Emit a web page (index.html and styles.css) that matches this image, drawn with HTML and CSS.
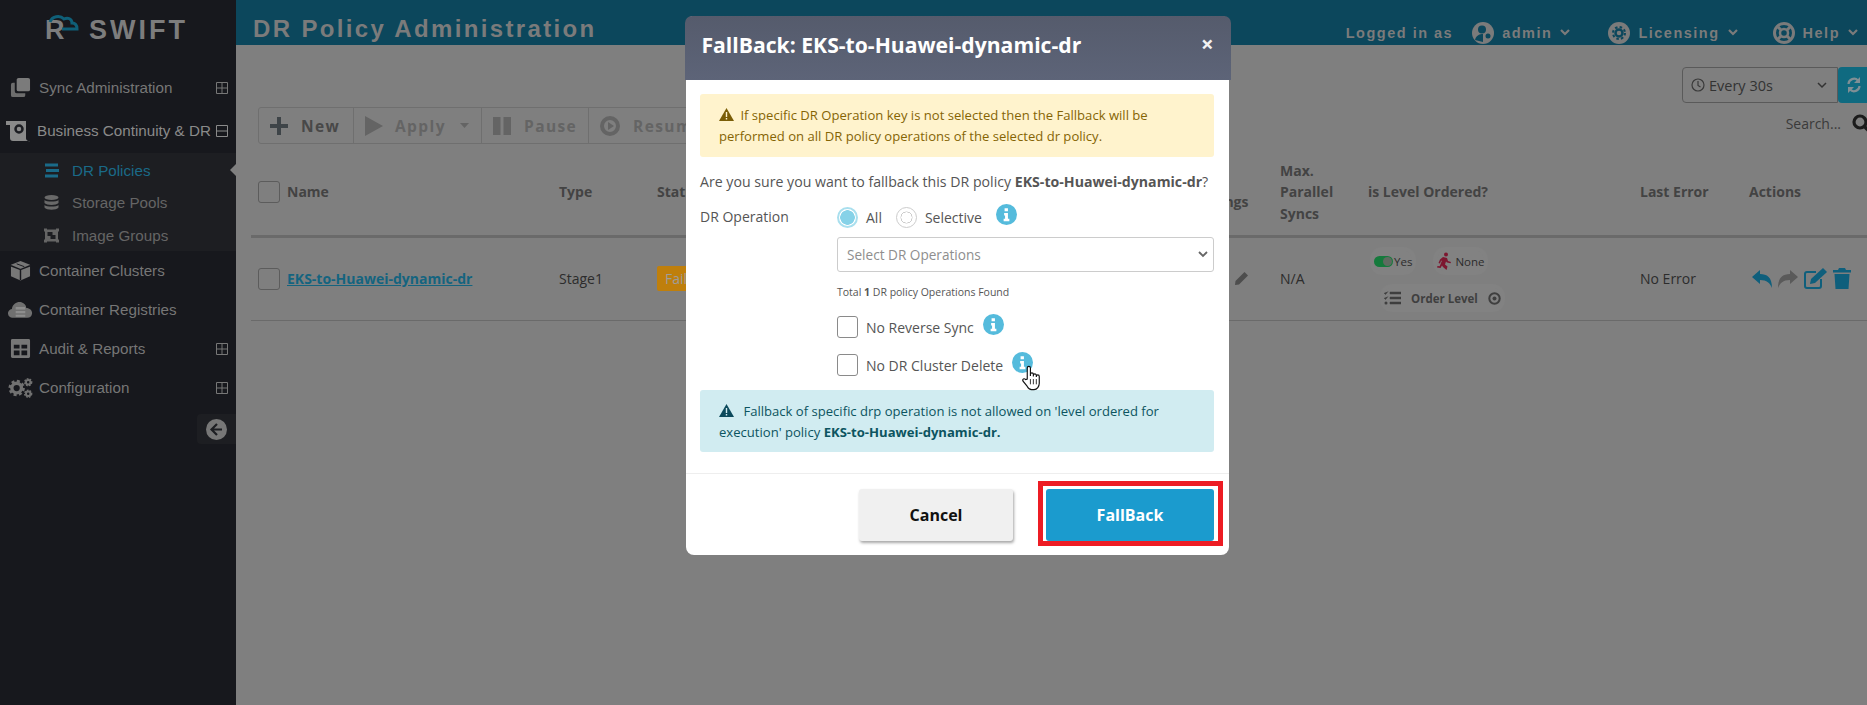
FILE: index.html
```html
<!DOCTYPE html>
<html lang="en">
<head>
<meta charset="utf-8">
<title>DR Policy Administration</title>
<link rel="stylesheet" href="styles.css">
</head>
<body>
<div class="app">
  <aside class="sidebar">
    <div class="logo">
      <span class="logo-mark">R
        <svg class="logo-cloud" width="32" height="20" viewBox="0 0 32 20"><path d="M3 7C5 1 13 0 17 4C21 2 25 4 25 8C28 8 30 10 30 14H15" fill="none" stroke="#0f5f78" stroke-width="3"/></svg>
      </span>
      <span class="logo-text">SWIFT</span>
    </div>
    <nav class="nav">
      <a class="nav-item">
        <svg class="nav-icon" viewBox="0 0 22 22"><rect x="7" y="1" width="14" height="14" rx="2" fill="#7b7b7b"/><path d="M5 6H3a2 2 0 0 0-2 2v11a2 2 0 0 0 2 2h11a2 2 0 0 0 2-2v-2H7a2 2 0 0 1-2-2z" fill="#6d6d6d"/></svg>
        <span class="nav-label">Sync Administration</span>
        <svg class="nav-box" viewBox="0 0 12 12"><path d="M.5.5h11v11H.5zM6 .5v11M.5 6h11" fill="none" stroke="#777"/></svg>
      </a>
      <a class="nav-item nav-item-active">
        <svg class="nav-icon nav-icon-wide" viewBox="0 0 26 22"><path d="M1 1h20v17a3 3 0 0 0 4 3H8a3 3 0 0 1-3-3V5H1z" fill="#8a8a8a"/><circle cx="14" cy="9" r="3.500" fill="none" stroke="#1c1d22" stroke-width="2.500"/></svg>
        <span class="nav-label">Business Continuity &amp; DR</span>
        <svg class="nav-box" viewBox="0 0 12 12"><path d="M.5.5h11v11H.5zM.5 6h11" fill="none" stroke="#8a8a8a"/></svg>
      </a>
      <div class="subnav">
        <a class="sub-item sub-item-active">
          <svg class="sub-icon" viewBox="0 0 15 14"><path d="M1 0h13v3H1zM2 5.500h13v3H2zM1 11h13v3H1z" fill="#1a6a88"/></svg>
          <span>DR Policies</span>
          <i class="sub-arrow"></i>
        </a>
        <a class="sub-item">
          <svg class="sub-icon" viewBox="0 0 15 15"><ellipse cx="7.500" cy="2.500" rx="7" ry="2.500" fill="#696969"/><path d="M.5 5c2 2 12 2 14 0v3c-2 2.500-12 2.500-14 0zM.5 10c2 2 12 2 14 0v2.500c-2 3-12 3-14 0z" fill="#696969"/></svg>
          <span>Storage Pools</span>
        </a>
        <a class="sub-item">
          <svg class="sub-icon" viewBox="0 0 15 14"><path d="M0 0h3v1h9V0h3v3h-1v8h1v3h-3v-1H3v1H0v-3h1V3H0z" fill="#656565"/><path d="M3.500 3.500h5v3h3v4h-5v-3h-3z" fill="#1d1e22"/></svg>
          <span>Image Groups</span>
        </a>
      </div>
      <a class="nav-item nav-item-low">
        <svg class="nav-icon" viewBox="0 0 22 22"><path d="M11 1l10 4v12l-10 4.500L1 17V5z" fill="#777"/><path d="M1 6l10 4 10-4M11 10v11" stroke="#17181d" stroke-width="1.500" fill="none"/><path d="M7 4l8 3" stroke="#17181d"/></svg>
        <span class="nav-label">Container Clusters</span>
      </a>
      <a class="nav-item nav-item-low">
        <svg class="nav-icon nav-icon-cloud" viewBox="0 0 26 18"><path d="M5 17a4.500 4.500 0 0 1-1-9C5 2 10 0 14 1c3 1 5 3 5 6 4 0 6.500 3 6 6-.5 3-2 4-5 4z" fill="#707070"/><path d="M8 6h10v2.500H8zM8 10h10v2.500H8zM8 14h10v2H8z" fill="#8d8d8d"/></svg>
        <span class="nav-label">Container Registries</span>
      </a>
      <a class="nav-item nav-item-low">
        <svg class="nav-icon" viewBox="0 0 22 20"><path d="M1 1.500A1.500 1.500 0 0 1 2.500 0h17A1.500 1.500 0 0 1 21 1.500v17a1.500 1.500 0 0 1-1.500 1.500h-17A1.500 1.500 0 0 1 1 18.500z" fill="#777"/><path d="M4 6h6v4H4zM12 6h6v4h-6zM4 12h6v5H4zM12 12h6v5h-6z" fill="#17181d"/></svg>
        <span class="nav-label">Audit &amp; Reports</span>
        <svg class="nav-box" viewBox="0 0 12 12"><path d="M.5.5h11v11H.5zM6 .5v11M.5 6h11" fill="none" stroke="#777"/></svg>
      </a>
      <a class="nav-item nav-item-low">
        <svg class="nav-icon nav-icon-cloud" viewBox="0 0 26 20"><circle cx="9" cy="10" r="5" fill="none" stroke="#717171" stroke-width="3.500"/><circle cx="9" cy="10" r="7" fill="none" stroke="#717171" stroke-width="3" stroke-dasharray="3 2.500"/><circle cx="21" cy="4" r="2.300" fill="none" stroke="#717171" stroke-width="2"/><circle cx="21" cy="4" r="3.600" fill="none" stroke="#717171" stroke-width="1.500" stroke-dasharray="1.800 1.200"/><circle cx="21" cy="16" r="2.300" fill="none" stroke="#717171" stroke-width="2"/><circle cx="21" cy="16" r="3.600" fill="none" stroke="#717171" stroke-width="1.500" stroke-dasharray="1.800 1.200"/></svg>
        <span class="nav-label">Configuration</span>
        <svg class="nav-box" viewBox="0 0 12 12"><path d="M.5.5h11v11H.5zM6 .5v11M.5 6h11" fill="none" stroke="#777"/></svg>
      </a>
    </nav>
    <div class="collapse-wrap">
      <button class="collapse">
        <svg width="21" height="21" viewBox="0 0 21 21"><circle cx="10.500" cy="10.500" r="10.500" fill="#777"/><path d="M11 5l-5.500 5.500L11 16M6 10.500h10" fill="none" stroke="#1d1e22" stroke-width="2.200"/></svg>
      </button>
    </div>
  </aside>

  <main class="main">
    <header class="topbar">
      <h1 class="title">DR Policy Administration</h1>
      <div class="top-right">
        <span class="logged">Logged in as</span>
        <span class="top-item top-admin">
          <svg width="22" height="22" viewBox="0 0 22 22"><circle cx="11" cy="11" r="11" fill="#7b7b7b"/><circle cx="10" cy="7.500" r="4" fill="#0c475c"/><path d="M3 18c1-5 5-6 8-6v8z" fill="#0c475c"/><circle cx="16" cy="14" r="2.500" fill="#0c475c"/></svg>
          <span>admin</span>
          <svg class="chev" viewBox="0 0 10 7"><path d="M1 1l4 4 4-4" fill="none" stroke="#7b7b7b" stroke-width="2.200"/></svg>
        </span>
        <span class="top-item top-lic">
          <svg width="22" height="22" viewBox="0 0 22 22"><circle cx="11" cy="11" r="11" fill="#7b7b7b"/><circle cx="11" cy="11" r="3.500" fill="none" stroke="#0c475c" stroke-width="2.500"/><circle cx="11" cy="11" r="6" fill="none" stroke="#0c475c" stroke-width="2" stroke-dasharray="2.500 2.200"/></svg>
          <span>Licensing</span>
          <svg class="chev" viewBox="0 0 10 7"><path d="M1 1l4 4 4-4" fill="none" stroke="#7b7b7b" stroke-width="2.200"/></svg>
        </span>
        <span class="top-item top-help">
          <svg width="22" height="22" viewBox="0 0 22 22"><circle cx="11" cy="11" r="9.500" fill="none" stroke="#7b7b7b" stroke-width="3"/><circle cx="11" cy="11" r="4" fill="none" stroke="#7b7b7b" stroke-width="2.500"/><path d="M5 5l3 3M17 5l-3 3M5 17l3-3M17 17l-3-3" stroke="#7b7b7b" stroke-width="3"/></svg>
          <span>Help</span>
          <svg class="chev" viewBox="0 0 10 7"><path d="M1 1l4 4 4-4" fill="none" stroke="#7b7b7b" stroke-width="2.200"/></svg>
        </span>
      </div>
    </header>

    <section class="content">
      <div class="refresh-row">
        <div class="refresh-select">
          <svg width="14" height="14" viewBox="0 0 14 14"><circle cx="7" cy="7" r="6" fill="none" stroke="#3a3a3a" stroke-width="1.200"/><path d="M7 3v4.500l2.500 1.500" fill="none" stroke="#3a3a3a" stroke-width="1.200"/></svg>
          <span>Every 30s</span>
          <svg class="select-chev" width="10" height="7" viewBox="0 0 10 7"><path d="M1 1l4 4 4-4" fill="none" stroke="#333" stroke-width="1.500"/></svg>
        </div>
        <button class="refresh-btn">
          <svg width="14" height="16" viewBox="0 0 14 16"><path d="M1.500 7A5.500 5.500 0 0 1 11 3.500M12.500 9A5.500 5.500 0 0 1 3 12.500" fill="none" stroke="#7f8f95" stroke-width="2.200"/><path d="M13 0v6H7zM1 16v-6h6z" fill="#7f8f95"/></svg>
        </button>
      </div>

      <div class="tool-row">
        <div class="toolbar">
          <span class="tool tool-new">
            <svg width="18" height="18" viewBox="0 0 18 18"><path d="M7 0h4v7h7v4h-7v7H7v-7H0V7h7z" fill="#3e4448"/></svg>
            <span>New</span>
          </span>
          <span class="tool tool-apply tool-off">
            <svg width="18" height="20" viewBox="0 0 18 20"><path d="M0 0l18 10L0 20z" fill="#646464"/></svg>
            <span>Apply</span>
            <svg class="caret" width="9" height="5" viewBox="0 0 9 5"><path d="M0 0h9L4.500 5z" fill="#646464"/></svg>
          </span>
          <span class="tool tool-pause tool-off">
            <svg width="18" height="18" viewBox="0 0 18 18"><path d="M0 0h7.500v18H0zM10.500 0H18v18h-7.500z" fill="#646464"/></svg>
            <span>Pause</span>
          </span>
          <span class="tool tool-resume tool-off">
            <svg width="20" height="20" viewBox="0 0 20 20"><circle cx="10" cy="10" r="8" fill="none" stroke="#646464" stroke-width="4"/><path d="M8 6l6 4-6 4z" fill="#646464"/></svg>
            <span>Resume</span>
          </span>
        </div>
        <div class="search">
          <span>Search...</span>
          <svg width="20" height="20" viewBox="0 0 20 20"><circle cx="8" cy="8" r="6" fill="none" stroke="#1c1c1c" stroke-width="3.200"/><path d="M12.500 12.500L18 18" stroke="#1c1c1c" stroke-width="3.600"/></svg>
        </div>
      </div>

      <table class="table">
        <colgroup>
          <col class="col-name"><col class="col-type"><col class="col-status"><col class="col-settings"><col class="col-max"><col class="col-level"><col class="col-error"><col class="col-actions">
        </colgroup>
        <thead>
          <tr>
            <th><span class="name-cell"><i class="check"></i>Name</span></th>
            <th>Type</th>
            <th>Status</th>
            <th class="th-low">Settings</th>
            <th>Max.<br>Parallel<br>Syncs</th>
            <th>is Level Ordered?</th>
            <th>Last Error</th>
            <th>Actions</th>
          </tr>
        </thead>
        <tbody>
          <tr>
            <td><span class="name-cell"><i class="check"></i><a class="link">EKS-to-Huawei-dynamic-dr</a></span></td>
            <td>Stage1</td>
            <td><span class="badge">Failed</span></td>
            <td class="td-pencil">
              <svg width="13" height="13" viewBox="0 0 13 13"><path d="M9.500 0L13 3.500 4 12.500 0 13l.5-4z" fill="#4d4d4d"/></svg>
            </td>
            <td>N/A</td>
            <td>
              <div class="level">
                <div class="level-line">
                  <span class="chip">
                    <span class="toggle"><i></i></span>Yes
                  </span>
                  <span class="chip">
                    <svg width="14" height="18" viewBox="0 0 14 18"><circle cx="9" cy="2.500" r="2" fill="#7d1730"/><path d="M6 5l4 1 1 3 3 1-.5 1.200L10 10.500l-1-1-1 3 2.500 2L9.500 18 6 15l-1-1.500L3.500 16 0 15.500l.5-1.500 2.200.2L5 8.500 4 9 3 11.500 1.500 11 3 7.500z" fill="#7d1730"/></svg>
                    None
                  </span>
                </div>
                <span class="chip chip-order">
                  <svg width="17" height="14" viewBox="0 0 17 14"><path d="M6 1h11v2H6zM6 6h11v2H6zM6 11h11v2H6zM0 2l1.500 1.500L4 0.500M0 7l1.500 1.500L4 5.500" fill="#3f3f3f" stroke="#3f3f3f" stroke-width=".5"/><circle cx="2" cy="12" r="1.500" fill="#3f3f3f"/></svg>
                  <b>Order Level</b>
                  <svg class="eye" width="13" height="13" viewBox="0 0 13 13"><circle cx="6.500" cy="6.500" r="5.200" fill="none" stroke="#3f3f3f" stroke-width="2"/><circle cx="6.500" cy="6.500" r="2" fill="#3f3f3f"/></svg>
                </span>
              </div>
            </td>
            <td>No Error</td>
            <td>
              <div class="actions">
                <svg width="20" height="18" viewBox="0 0 20 18"><path d="M0 7L8 0v4c7 0 12 3 12 14-2-5-5-8-12-8v4z" fill="#0f5f7c"/></svg>
                <svg width="20" height="18" viewBox="0 0 20 18"><path d="M20 7L12 0v4C5 4 0 7 0 18c2-5 5-8 12-8v4z" fill="#5a5a5a"/></svg>
                <svg width="23" height="21" viewBox="0 0 23 21"><path d="M17 11v7a2 2 0 0 1-2 2H3a2 2 0 0 1-2-2V6a2 2 0 0 1 2-2h9" fill="none" stroke="#0f5f7c" stroke-width="2"/><path d="M19 0l4 4L11 15l-5 1 1-5z" fill="#0f5f7c"/></svg>
                <svg width="18" height="21" viewBox="0 0 18 21"><path d="M6 0h6l1 2h5v2.500H0V2h5zM1.500 6h15l-1 15h-13z" fill="#0f5f7c"/></svg>
              </div>
            </td>
          </tr>
        </tbody>
      </table>
    </section>
  </main>
</div>

<div class="modal">
  <div class="modal-head">
    <h2>FallBack: EKS-to-Huawei-dynamic-dr</h2>
    <span class="modal-close">×</span>
  </div>
  <div class="modal-body">
    <div class="alert alert-warn">
      <svg class="alert-icon" width="15" height="13" viewBox="0 0 15 13"><path d="M7.500 0L15 13H0z" fill="#7a5d07"/><path d="M6.800 4h1.400v5H6.800zM6.800 10h1.400v1.500H6.800z" fill="#fff3cd"/></svg>
      If specific DR Operation key is not selected then the Fallback will be performed on all DR policy operations of the selected dr policy.
    </div>
    <p class="question">Are you sure you want to fallback this DR policy <b>EKS-to-Huawei-dynamic-dr</b>?</p>
    <div class="form-grid">
      <span class="form-label">DR Operation</span>
      <div class="form-controls">
        <div class="radio-row">
          <i class="radio radio-on"></i><span class="radio-text">All</span>
          <i class="radio radio-off"></i><span class="radio-text">Selective</span>
          <svg class="info info-raised" viewBox="0 0 22 22"><circle cx="11" cy="11" r="11" fill="#55bbdc"/><path d="M9 4.500h3.500v3H9zM8.500 9.500h4v6h1.500V18H8v-2.500h1.500V12h-1z" fill="#fff"/></svg>
        </div>
        <div class="select">
          <span>Select DR Operations</span>
          <svg width="10" height="7" viewBox="0 0 10 7"><path d="M1 1l4 4 4-4" fill="none" stroke="#666" stroke-width="1.800"/></svg>
        </div>
        <div class="total">Total <b>1</b> DR policy Operations Found</div>
        <label class="check-row">
          <i class="check-lg"></i><span>No Reverse Sync</span>
          <svg class="info info-raised" viewBox="0 0 22 22"><circle cx="11" cy="11" r="11" fill="#55bbdc"/><path d="M9 4.500h3.500v3H9zM8.500 9.500h4v6h1.500V18H8v-2.500h1.500V12h-1z" fill="#fff"/></svg>
        </label>
        <label class="check-row check-row-last">
          <i class="check-lg"></i><span>No DR Cluster Delete</span>
          <span class="info-wrap">
            <svg class="info" viewBox="0 0 22 22"><circle cx="11" cy="11" r="11" fill="#55bbdc"/><path d="M9 4.500h3.500v3H9zM8.500 9.500h4v6h1.500V18H8v-2.500h1.500V12h-1z" fill="#fff"/></svg>
            <svg class="cursor" width="20" height="26" viewBox="0 0 19 24"><path d="M5 13V2.500a1.500 1.500 0 0 1 3 0V10V8.500a1.400 1.400 0 0 1 2.800 0V10.500V9.500a1.400 1.400 0 0 1 2.800 0V11V10.500a1.400 1.400 0 0 1 2.800 0V17c0 3-2 6-5 6H9c-2 0-3-1-4-3L1 15c-1-2 1-3 2.500-1.500z" fill="#fff" stroke="#111" stroke-width="1.100"/><path d="M8 13v5M10.800 13v5M13.600 13v5" stroke="#111" stroke-width=".8"/></svg>
          </span>
        </label>
      </div>
    </div>
    <div class="alert alert-info">
      <svg class="alert-icon alert-icon-info" width="15" height="13" viewBox="0 0 15 13"><path d="M7.500 0L15 13H0z" fill="#0c4a5c"/><path d="M6.800 4h1.400v5H6.800zM6.800 10h1.400v1.500H6.800z" fill="#d1ecf1"/></svg>
      Fallback of specific drp operation is not allowed on 'level ordered for execution' policy <b>EKS-to-Huawei-dynamic-dr.</b>
    </div>
  </div>
  <div class="modal-foot">
    <button class="btn btn-cancel">Cancel</button>
    <button class="btn btn-fallback">FallBack<span class="highlight"></span></button>
  </div>
</div>
</body>
</html>
```
FILE: styles.css
```css
* { box-sizing: border-box; }
html, body { margin: 0; height: 100%; overflow: hidden; }
body { font-family: "Open Sans", "Liberation Sans", sans-serif; font-size: 14px; background: #7f7f7f; color: #2c2c2c; }
i { display: block; }
svg { display: block; flex: none; }
button { font: inherit; border: 0; padding: 0; }

.app { display: flex; height: 705px; }

/* sidebar */
.sidebar { flex: 0 0 236px; background: #17181d; font-family: "Liberation Sans", Arial, sans-serif; }
.logo { height: 67px; display: flex; align-items: flex-start; padding: 17px 0 0 45px; color: #7d7d7d; font-weight: 700; }
.logo-mark { position: relative; font-size: 27px; line-height: 27px; width: 44px; }
.logo-cloud { position: absolute; left: 2px; top: -2px; }
.logo-text { font-size: 27px; line-height: 27px; letter-spacing: 3px; }
.nav-item { display: flex; align-items: center; height: 41px; padding: 0 8px 0 10px; color: #767676; font-size: 15.2px; }
.nav-item-active { height: 45px; color: #8a8a8a; padding-left: 5px; }
.nav-item-low { height: 39px; }
.nav-icon { width: 21px; height: 21px; }
.nav-icon-wide { width: 26px; height: 22px; margin-right: 6px; }
.nav-icon-cloud { width: 25px; height: 20px; margin-left: -2px; margin-right: -2px; }
.nav-label { margin-left: 8px; flex: 1; white-space: nowrap; }
.nav-item-active .nav-label { margin-left: 0; }
.nav-box { width: 12px; height: 12px; }
.subnav { background: #1d1e22; padding: 1px 0 0; height: 98px; }
.sub-item { display: flex; align-items: center; height: 32.500px; padding-left: 44px; color: #656565; font-size: 15.2px; gap: 13px; position: relative; }
.sub-icon { width: 15px; height: 15px; }
.sub-item-active { color: #1a6a88; }
.sub-arrow { position: absolute; right: 0; top: 10px; border: 6px solid transparent; border-right-color: #7f7f7f; border-left-width: 0; }
.collapse-wrap { display: flex; justify-content: flex-end; margin-top: 7px; }
.collapse { width: 39px; height: 30px; background: #1d1e22; border-radius: 4px 0 0 4px; display: flex; align-items: center; justify-content: center; }

/* topbar */
.main { flex: 1; min-width: 0; display: flex; flex-direction: column; }
.topbar { height: 45px; background: #0c475c; display: flex; justify-content: space-between; padding-left: 17px; position: relative; }
.title { margin: 11px 0 0; font: 700 24px/36px "Liberation Sans", Arial, sans-serif; letter-spacing: 2.350px; color: #7b7b7b; white-space: nowrap; }
.top-right { display: flex; align-items: center; padding-top: 20px; font: 700 14.500px/22px "Liberation Sans", Arial, sans-serif; letter-spacing: 1.500px; color: #7b7b7b; }
.logged { margin-right: 19px; }
.top-item { display: flex; align-items: center; gap: 8px; }
.top-admin { margin-right: 38px; }
.top-lic { margin-right: 35px; }
.top-help { margin-right: 9px; }
.chev { width: 10px; height: 7px; }

/* content */
.content { padding: 22px 0 0 15px; }
.refresh-row { display: flex; justify-content: flex-end; }
.refresh-select { width: 156px; height: 36px; border: 1px solid #5a5a5a; border-radius: 4px 0 0 4px; display: flex; align-items: center; padding: 0 10px 0 8px; gap: 4px; font-size: 14.500px; color: #333; }
.select-chev { margin-left: auto; }
.refresh-btn { width: 29px; height: 36px; background: #0f6a80; border-radius: 4px 0 0 4px; display: flex; align-items: center; padding-left: 9px; }
.tool-row { display: flex; justify-content: space-between; align-items: flex-start; margin-top: 4px; padding-left: 7px; }
.toolbar { display: flex; height: 37px; border: 1px solid #6f6f6f; border-radius: 3px; font-weight: 700; font-size: 15.500px; letter-spacing: 1.400px; color: #484848; }
.tool { display: flex; align-items: center; border-left: 1px solid #6f6f6f; padding-left: 11px; }
.tool:first-child { border-left: 0; }
.tool-off { color: #646464; }
.tool-new { width: 94px; gap: 13px; }
.tool-apply { width: 128px; gap: 12px; }
.caret { margin-left: 2px; }
.tool-pause { width: 107px; gap: 13px; }
.tool-resume { width: 130px; gap: 13px; }
.search { display: flex; align-items: center; gap: 11px; height: 33px; font-size: 14px; color: #3a3a3a; margin-right: -5px; }
.table { width: 1616px; table-layout: fixed; border-collapse: collapse; margin-top: 5px; }
.col-name { width: 301px; }
.col-type { width: 98px; }
.col-status { width: 535px; }
.col-settings { width: 88px; }
.col-max { width: 88px; }
.col-level { width: 272px; }
.col-error { width: 109px; }
.col-actions { width: 125px; }
.table th { height: 87px; padding: 0 7px; text-align: left; font-size: 14px; line-height: 21.500px; font-weight: 700; color: #434343; border-bottom: 3px solid #6a6a6a; }
.table th.th-low { padding-top: 20px; }
.table td { height: 84px; padding: 0 7px; border-bottom: 1px solid #6a6a6a; color: #2c2c2c; font-size: 14px; }
.name-cell { display: flex; align-items: center; gap: 7px; }
.check { width: 22px; height: 22px; border: 1px solid #5c5c5c; border-radius: 3px; }
.link { color: #14647f; font-weight: 700; text-decoration: underline; }
.badge { display: inline-block; background: #bf7f0c; color: #9d9d9d; height: 25px; line-height: 25px; padding: 0 8px; border-radius: 2px; }
.td-pencil { padding-left: 50px !important; }
.level { display: flex; flex-direction: column; gap: 17px; padding: 2px 0 0 6px; font-size: 11.500px; }
.level-line { display: flex; gap: 25px; }
.chip { display: flex; align-items: center; gap: 4px; height: 20px; background: #828282; box-shadow: 0 0 0 4px #828282; border-radius: 8px; width: fit-content; }
.chip-order { margin-left: 10px; gap: 10px; color: #3f3f3f; }
.toggle { display: block; width: 19px; height: 11px; border-radius: 6px; background: #157a3c; position: relative; margin-right: -3px; }
.toggle i { position: absolute; right: 1px; top: 1px; width: 9px; height: 9px; border-radius: 50%; background: #5f6a60; }
.actions { display: flex; align-items: center; gap: 6px; padding-left: 3px; }

/* modal */
.modal { position: absolute; left: 686px; top: 16px; width: 543px; background: #fff; border-radius: 8px; color: #555; font-size: 14px; }
.modal-head { margin: 0 -1.500px; height: 64px; border-radius: 7px 7px 0 0; background: linear-gradient(#555b6c, #5d6478); color: #fff; display: flex; justify-content: space-between; padding: 15px 17px 0 17px; }
.modal-head h2 { margin: 0; font-size: 21.150px; line-height: 28px; font-weight: 700; }
.modal-close { font-size: 22px; font-weight: 700; line-height: 24px; color: #f2f2f2; }
.modal-body { padding: 14px 15px 0 14px; }
.alert { border-radius: 3px; padding: 11px 19px; line-height: 20.500px; font-size: 13.080px; }
.alert-icon { display: inline-block; vertical-align: -1px; margin-right: 3px; }
.alert-icon-info { margin-right: 6px; }
.alert-warn { background: #fff3cd; color: #856404; height: 63px; }
.alert-info { background: #d1ecf1; color: #0c5460; height: 62px; margin-top: 14px; }
.question { margin: 15px 0 0; line-height: 20px; white-space: nowrap; font-size: 14.150px; }
.form-grid { display: grid; grid-template-columns: 137px 1fr; margin-top: 15px; }
.form-label { line-height: 20px; }
.radio-row { display: flex; align-items: center; height: 21px; }
.radio { width: 21px; height: 21px; border-radius: 50%; }
.radio-on { border: 2px solid #a9dfee; background: radial-gradient(circle, #86d2e8 0 7px, #fff 7.500px); }
.radio-off { border: 1px solid #ccc; background: radial-gradient(circle, #fff 0 5px, #ccc 5.200px 5.800px, #fff 6.200px); margin-left: 14px; }
.radio-text { margin-left: 8px; }
.info { width: 21px; height: 21px; }
.info-raised { margin-left: 14px; transform: translateY(-3px); }
.select { height: 35px; margin-top: 9px; border: 1px solid #ccc; border-radius: 3px; display: flex; align-items: center; justify-content: space-between; padding: 0 5px 0 9px; color: #8e8e8e; font-size: 13.600px; }
.total { margin-top: 12px; font-size: 10.500px; line-height: 16px; color: #555; }
.check-row { display: flex; align-items: center; height: 22px; margin-top: 16px; }
.check-row-last { margin-top: 16px; }
.check-lg { width: 21px; height: 22px; border: 1px solid #8a8a8a; border-radius: 3px; margin-right: 8px; }
.info-wrap { position: relative; margin-left: 9px; transform: translateY(-3px); }
.check-row .info-raised { margin-left: 9px; }
.cursor { position: absolute; left: 10px; top: 13px; }
.modal-foot { border-top: 1px solid #eee; margin-top: 21px; padding: 15px 15px 14px; display: flex; justify-content: flex-end; gap: 33px; }
.btn { height: 52px; border-radius: 3px; font-weight: 700; font-size: 16px; padding-bottom: 1px; }
.btn-cancel { width: 154px; background: #f0f0f0; color: #111; box-shadow: 1px 2px 3px rgba(0,0,0,.35); }
.btn-fallback { width: 168px; background: #1b9bce; color: #fff; position: relative; }
.highlight { position: absolute; top: -8px; left: -8px; right: -9px; bottom: -5px; border: 5px solid #ed1c24; }
```
